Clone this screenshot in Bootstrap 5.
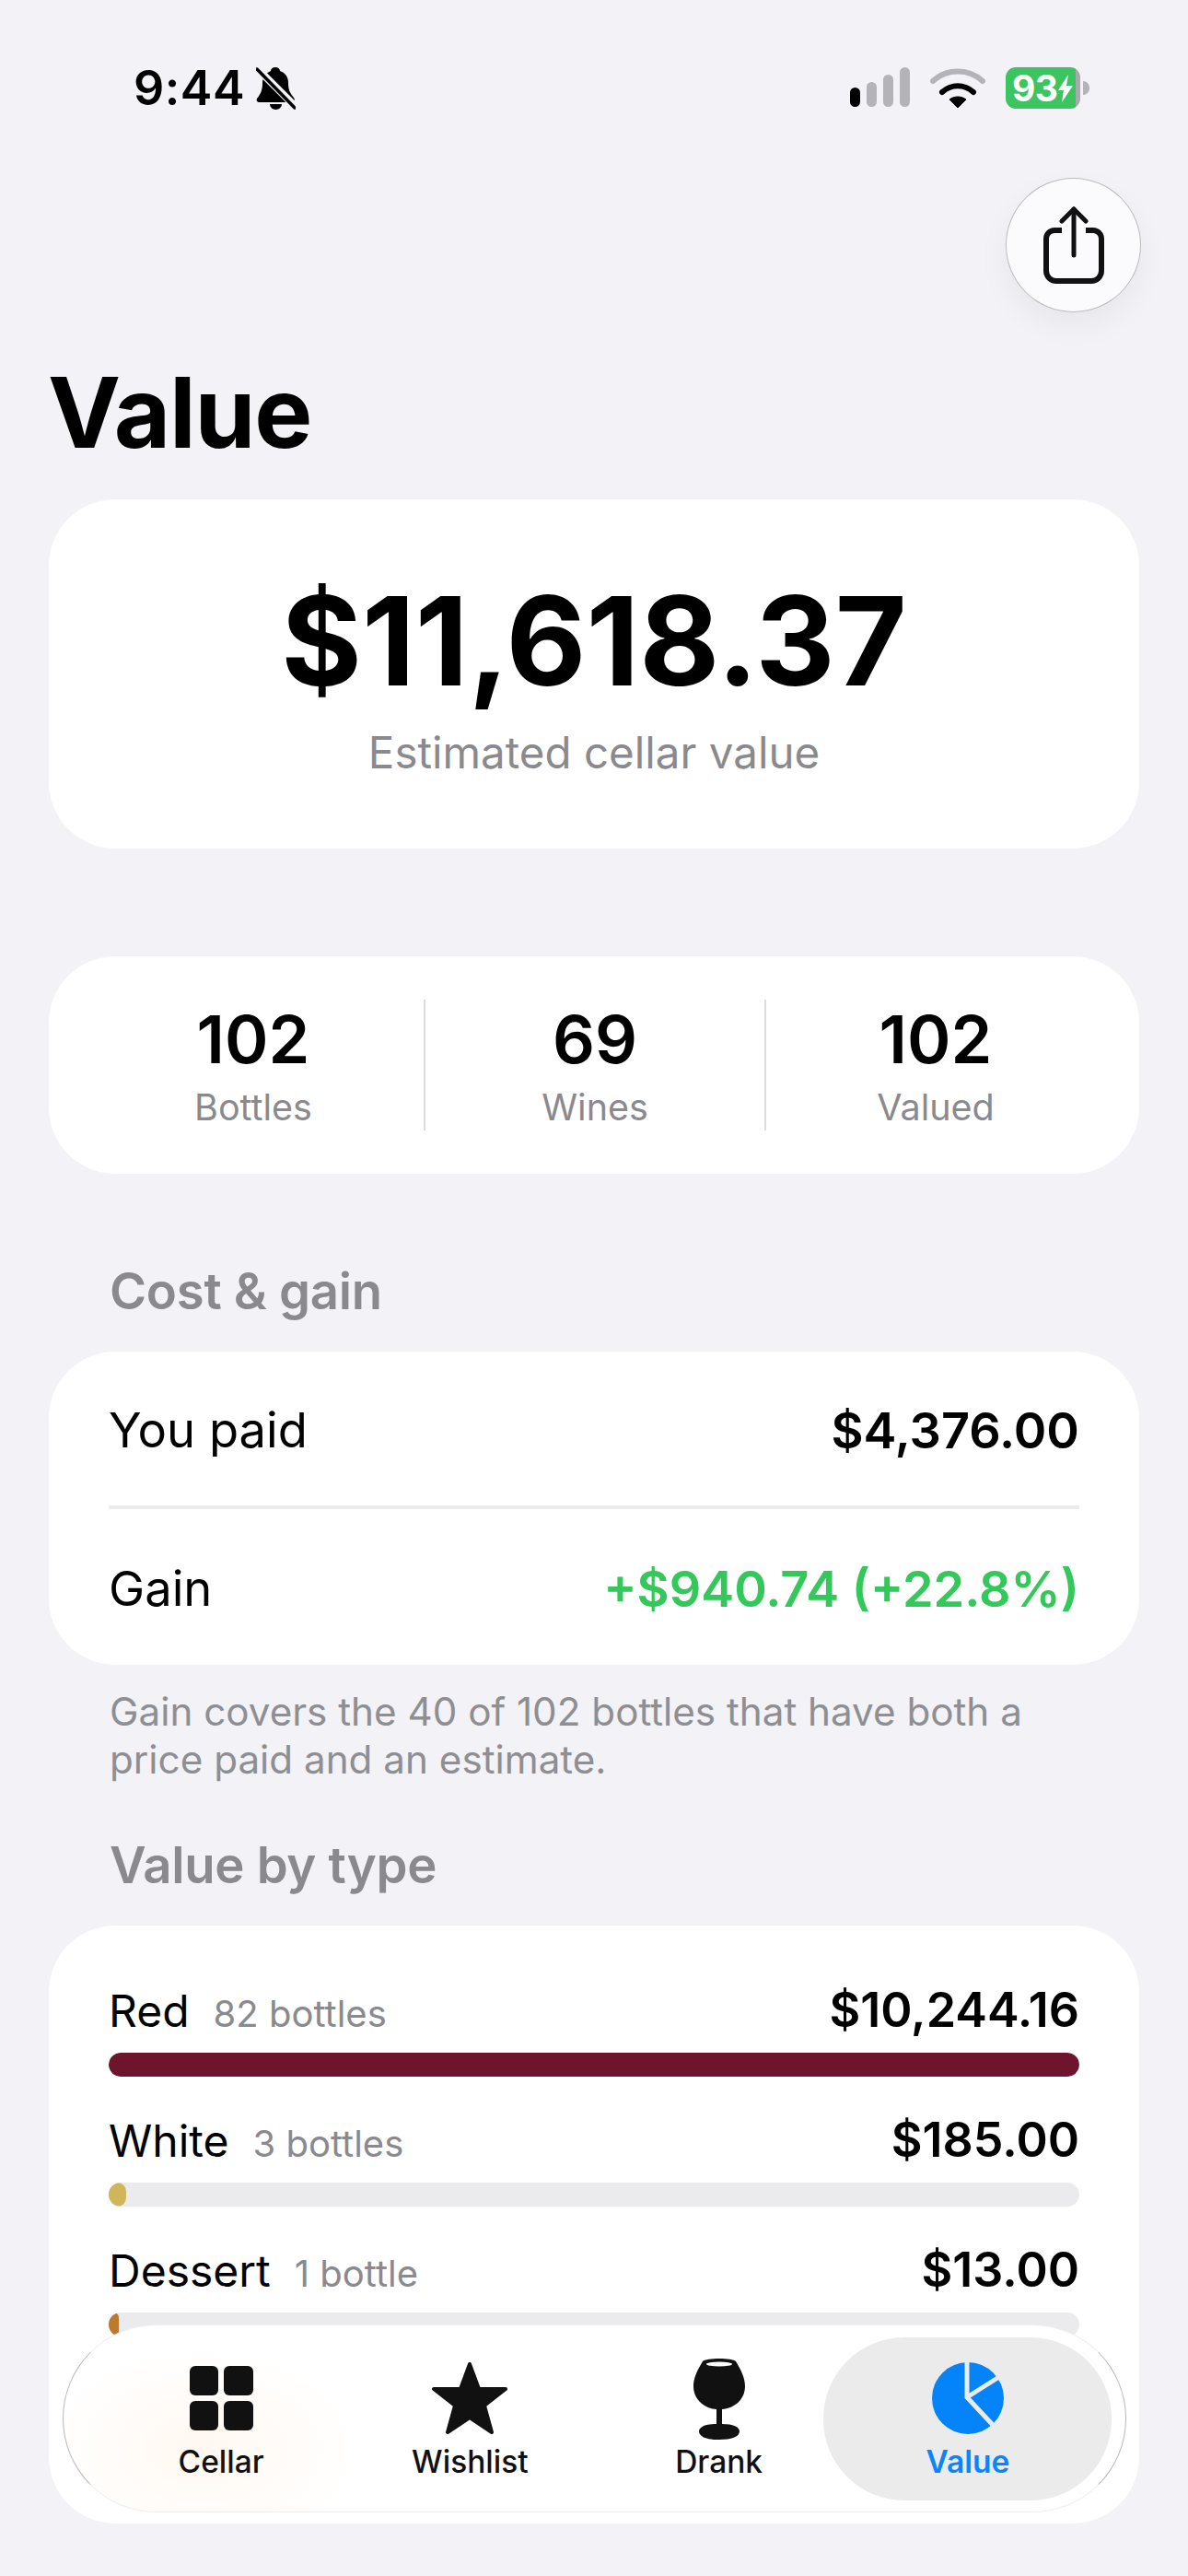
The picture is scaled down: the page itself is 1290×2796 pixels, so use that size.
<!DOCTYPE html>
<html lang="en">
<head>
    <meta charset="UTF-8">
    <meta name="viewport" content="width=device-width, initial-scale=1.0">
    <title>Value</title>
    <link rel="stylesheet" href="https://cdn.jsdelivr.net/npm/bootstrap@5.3.2/dist/css/bootstrap.min.css">
    <style>
        body {
            background-color: #f2f2f7;
            font-family: Inter, "Liberation Sans", sans-serif;
            color: #000;
        }
        .phone-page {
            width: 1290px;
            height: 2796px;
            overflow: hidden;
            padding: 0 53px;
        }
        .status-row {
            height: 193px;
            padding: 73px 54px 0 92px;
        }
        .status-time { font-size: 52px; font-weight: 600; line-height: 46px; letter-spacing: .5px; }
        .status-right { gap: 22px; }
        .signal-bars { gap: 7px; height: 43px; }
        .signal-bars span { width: 11px; background: #b3b3b8; border-radius: 6px; }
        .signal-bars .on { background: #000; }
        .batt-body {
            width: 81px; height: 45px; border-radius: 11px;
            background: linear-gradient(90deg, #3cc461 0 94%, #a9a9ad 94%);
            color: #fff; font-size: 39px; font-weight: 700; line-height: 45px;
            padding-left: 7px; letter-spacing: -.5px;
        }
        .batt-cap { width: 7px; height: 15px; background: #b3b3b8; border-radius: 0 8px 8px 0; margin-left: 3px; }
        .share-wrap { height: 146px; }
        .share-btn {
            width: 147px; height: 146px; margin-right: -2px;
            background: #fbfbfe; border: 1px solid #bcbcc0;
            box-shadow: 0 14px 34px rgba(0, 0, 0, .05);
        }
        .page-title { font-size: 106px; font-weight: 700; line-height: 120px; margin: 49px 0 34px -1px; letter-spacing: -1.200px; }
        .app-card { border: 0; background: #fff; border-radius: 72px; }
        .hero-card { height: 379px; padding-top: 88px; margin-bottom: 117px; }
        .hero-amount { font-size: 134px; font-weight: 700; line-height: 130px; }
        .hero-caption { font-size: 47.500px; line-height: 58px; color: #8a8a8e; margin-top: 28px; }
        .stats-card { height: 236px; margin-bottom: 94px; }
        .stat-col { width: 370px; height: 142px; }
        .stat-col + .stat-col { border-left: 2px solid #dcdcde; }
        .stat-num { font-size: 72px; font-weight: 600; line-height: 76px; margin-top: 5px; }
        .stat-label { font-size: 39.500px; line-height: 50px; color: #8a8a8e; margin-top: 11px; }
        .sect-head { font-size: 54.500px; font-weight: 600; color: #8a8a8e; line-height: 66px; padding-left: 66px; margin-bottom: 33px; letter-spacing: -.3px; }
        .cost-card { height: 340px; padding: 0 65px; }
        .cost-row { height: 167px; font-size: 52.500px; padding-top: 3px; }
        .cost-row + .cost-row { border-top: 4px solid #ececee; height: 173px; }
        .cost-val { font-weight: 600; font-size: 54px; }
        .gain-val { color: #34c759; }
        .foot-note { font-size: 42.200px; line-height: 52px; color: #8e8e93; padding-left: 66px; margin: 25px 0 55px; }
        .type-card { height: 649px; padding: 55px 65px 0; }
        .type-row { height: 141px; }
        .type-line { height: 83px; line-height: 73px; }
        .type-name { font-size: 48px; }
        .type-count { font-size: 40px; color: #8a8a8e; margin-left: 26px; }
        .type-val { font-size: 52px; font-weight: 600; }
        .type-bar { height: 26px; background: #ebebed; border-radius: 13px; }
        .bar-red { background: #6f142d; border-radius: 13px; }
        .bar-white { background: #cfb65b; border-radius: 13px; }
        .bar-dessert { background: #bd7a2e; border-radius: 6px; }
        .tab-bar {
            left: 68px; top: 2523px; width: 1155px; height: 204px;
            border-radius: 102px; padding: 0 36px;
            background: radial-gradient(ellipse 170px 110px at 150px 135px, #fff8f1, #fff 100%);
            border: 1px solid; border-color: #eeeef0 #b9b9bd #eeeef0 #b9b9bd;
        }
        .tab-item { width: 270.500px; height: 100%; color: #111; }
        .tab-item.active::before {
            content: ""; position: absolute; left: -22px; right: -21px; top: 13px; bottom: 12px;
            background: #ebebec; border-radius: 88px;
        }
        .tab-item svg, .tab-label { position: relative; }
        .tab-icon-box { height: 90px; margin-top: 34px; }
        .tab-label { font-size: 33.500px; font-weight: 500; line-height: 40px; margin-top: 4px; }
        .tab-item.active .tab-label { color: #0a84ff; font-weight: 600; }
    </style>
</head>
<body>
    <div class="phone-page position-relative">

        <div class="status-row d-flex justify-content-between align-items-start">
            <div class="d-flex align-items-center gap-2">
                <span class="status-time">9:44</span>
                <svg width="43" height="46" viewBox="0 0 43 46" class="ms-1">
                    <path d="M21 0c3 0 5 2 5 4 6 2 9 7 9 13 0 8 2 11 6 16 2 3 0 5-2 5H4c-3 0-4-2-3-4 4-5 6-9 6-17 0-6 4-11 9-13 0-2 2-4 5-4zM15 40h13c0 3-3 6-6.500 6S15 43 15 40z" fill="#000"/>
                    <line x1="0" y1="0" x2="43" y2="43" stroke="#f2f2f7" stroke-width="8"/>
                    <line x1="1" y1="2" x2="42" y2="44" stroke="#000" stroke-width="3.500" stroke-linecap="round"/>
                </svg>
            </div>
            <div class="status-right d-flex align-items-start">
                <div class="signal-bars d-flex align-items-end">
                    <span class="on" style="height: 21px"></span>
                    <span style="height: 27px"></span>
                    <span style="height: 35px"></span>
                    <span style="height: 43px"></span>
                </div>
                <svg width="60" height="44" viewBox="0 0 60 44">
                    <path d="M3 15C18 1 42 1 57 15" fill="none" stroke="#b3b3b8" stroke-width="6" stroke-linecap="round"/>
                    <path d="M13 27C23 18 37 18 47 27" fill="none" stroke="#000" stroke-width="6" stroke-linecap="round"/>
                    <path d="M21 35c5-4 13-4 18 0L30 44z" fill="#000" stroke="#000" stroke-linejoin="round"/>
                </svg>
                <div class="d-flex align-items-center">
                    <div class="batt-body d-flex">
                        <span>93</span>
                        <svg width="16" height="30" viewBox="0 0 16 30" class="mt-2"><path d="M11 0 0 17h6L4 30 16 12H9z" fill="#fff"/></svg>
                    </div>
                    <div class="batt-cap"></div>
                </div>
            </div>
        </div>

        <div class="share-wrap d-flex justify-content-end">
            <div class="share-btn rounded-circle d-flex align-items-center justify-content-center">
                <svg width="66" height="84" viewBox="0 0 66 84">
                    <path d="M20 26h-8a9 9 0 0 0-9 9v35a11 11 0 0 0 11 11h38a11 11 0 0 0 11-11V35a9 9 0 0 0-9-9h-8" fill="none" stroke="#111" stroke-width="6"/>
                    <path d="M33 3v50" stroke="#111" stroke-width="5" stroke-linecap="round"/>
                    <path d="M20 16 33 3l13 13" fill="none" stroke="#111" stroke-width="5" stroke-linecap="round" stroke-linejoin="round"/>
                </svg>
            </div>
        </div>

        <h1 class="page-title">Value</h1>

        <div class="card app-card hero-card text-center">
            <div class="hero-amount">$11,618.37</div>
            <div class="hero-caption">Estimated cellar value</div>
        </div>

        <div class="card app-card stats-card flex-row align-items-center justify-content-center">
            <div class="stat-col text-center"><div class="stat-num">102</div><div class="stat-label">Bottles</div></div>
            <div class="stat-col text-center"><div class="stat-num">69</div><div class="stat-label">Wines</div></div>
            <div class="stat-col text-center"><div class="stat-num">102</div><div class="stat-label">Valued</div></div>
        </div>

        <div class="sect-head">Cost &amp; gain</div>
        <div class="card app-card cost-card">
            <div class="cost-row d-flex justify-content-between align-items-center">
                <span>You paid</span><span class="cost-val">$4,376.00</span>
            </div>
            <div class="cost-row d-flex justify-content-between align-items-center">
                <span>Gain</span><span class="cost-val gain-val">+$940.74 (+22.8%)</span>
            </div>
        </div>
        <p class="foot-note">Gain covers the 40 of 102 bottles that have both a<br>price paid and an estimate.</p>

        <div class="sect-head">Value by type</div>
        <div class="card app-card type-card">
            <div class="type-row">
                <div class="type-line d-flex justify-content-between align-items-baseline">
                    <div><span class="type-name">Red</span><span class="type-count">82 bottles</span></div>
                    <span class="type-val">$10,244.16</span>
                </div>
                <div class="progress type-bar"><div class="progress-bar bar-red" style="width: 100%"></div></div>
            </div>
            <div class="type-row">
                <div class="type-line d-flex justify-content-between align-items-baseline">
                    <div><span class="type-name">White</span><span class="type-count">3 bottles</span></div>
                    <span class="type-val">$185.00</span>
                </div>
                <div class="progress type-bar"><div class="progress-bar bar-white" style="width: 1.800%"></div></div>
            </div>
            <div class="type-row">
                <div class="type-line d-flex justify-content-between align-items-baseline">
                    <div><span class="type-name">Dessert</span><span class="type-count">1 bottle</span></div>
                    <span class="type-val">$13.00</span>
                </div>
                <div class="progress type-bar"><div class="progress-bar bar-dessert" style="width: 1%"></div></div>
            </div>
        </div>

        <nav class="tab-bar position-absolute d-flex">
            <div class="tab-item position-relative d-flex flex-column align-items-center">
                <div class="tab-icon-box d-flex align-items-center">
                    <svg width="69" height="70" viewBox="0 0 69 70" fill="#111">
                        <rect width="31" height="32" rx="6"/><rect x="37" width="32" height="32" rx="6"/>
                        <rect y="38" width="31" height="32" rx="6"/><rect x="37" y="38" width="32" height="32" rx="6"/>
                    </svg>
                </div>
                <span class="tab-label">Cellar</span>
            </div>
            <div class="tab-item position-relative d-flex flex-column align-items-center">
                <div class="tab-icon-box d-flex align-items-center">
                    <svg width="84" height="80" viewBox="0 0 84 80">
                        <path d="M42 3 52 30H81L58 48 66 77 42 61 18 77 26 48 3 30H32Z" fill="#111" stroke="#111" stroke-width="4" stroke-linejoin="round"/>
                    </svg>
                </div>
                <span class="tab-label">Wishlist</span>
            </div>
            <div class="tab-item position-relative d-flex flex-column align-items-center">
                <div class="tab-icon-box d-flex align-items-center">
                    <svg width="56" height="89" viewBox="0 0 56 89">
                        <path d="M10 4C14 0 42 0 46 4 52 14 56 22 56 31 56 45 45 55 31 56V72C43 72 50 75 50 80 50 86 41 89 28 89 15 89 6 86 6 80 6 75 13 72 25 72V56C11 55 0 45 0 31 0 22 4 14 10 4Z" fill="#111"/>
                        <ellipse cx="28" cy="7" rx="14" ry="2.500" fill="#fff"/>
                    </svg>
                </div>
                <span class="tab-label">Drank</span>
            </div>
            <div class="tab-item active position-relative d-flex flex-column align-items-center">
                <div class="tab-icon-box d-flex align-items-center">
                    <svg width="78" height="78" viewBox="0 0 78 78">
                        <circle cx="39" cy="39" r="39" fill="#0583f9"/>
                        <path d="M38 0V38L66 68M38 38 76 14" fill="none" stroke="#ebebec" stroke-width="5"/>
                    </svg>
                </div>
                <span class="tab-label">Value</span>
            </div>
        </nav>
    </div>
    <script src="https://cdn.jsdelivr.net/npm/bootstrap@5.3.2/dist/js/bootstrap.bundle.min.js"></script>
</body>
</html>
